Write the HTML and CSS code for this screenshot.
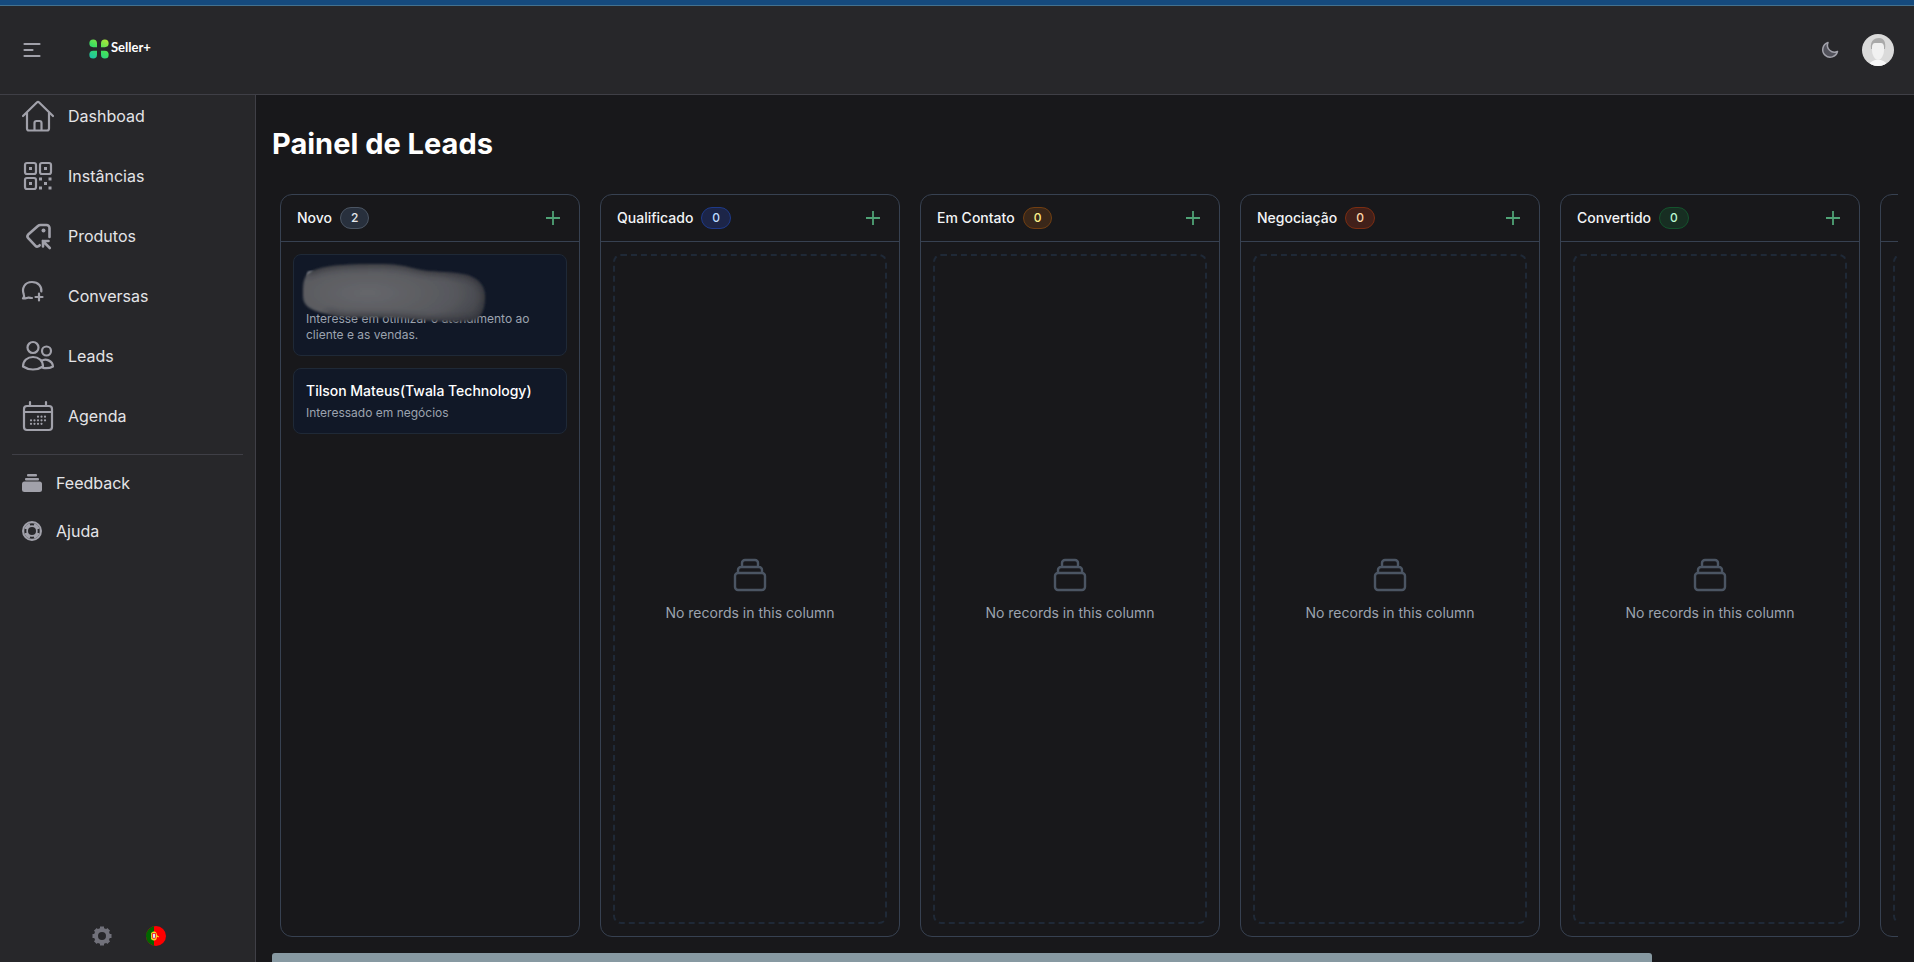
FILE: index.html
```html
<!DOCTYPE html>
<html lang="pt">
<head>
    <meta charset="UTF-8">
    <meta name="viewport" content="width=device-width, initial-scale=1.0">
    <title>Painel de Leads</title>
    <link rel="stylesheet" href="styles.css">
</head>
<body>

<svg class="sprite" aria-hidden="true">
    <symbol id="icon-plus" viewBox="0 0 20 20">
        <path d="M10 3v14M3 10h14"/>
    </symbol>
    <symbol id="icon-stack" viewBox="0 0 40 40">
        <rect x="5" y="18" width="30" height="17" rx="3"/>
        <path d="M8 18v-3a3 3 0 0 1 3-3h18a3 3 0 0 1 3 3v3M12 12V8a3 3 0 0 1 3-3h10a3 3 0 0 1 3 3v4"/>
    </symbol>
</svg>

<div class="top-strip"></div>

<header class="topbar">
    <button class="icon-btn" type="button" aria-label="Menu">
        <svg class="icon-24 line" viewBox="0 0 24 24"><path d="M4.500 6h15M4.500 12h8M4.500 18h15"/></svg>
    </button>
    <a class="logo" href="#">
        <svg class="logo-mark" viewBox="0 0 20 20">
            <defs>
                <linearGradient id="leaf" gradientUnits="userSpaceOnUse" x1="16" y1="1" x2="4" y2="19">
                    <stop offset="0" stop-color="#a5e63b"/>
                    <stop offset="0.5" stop-color="#3fe05f"/>
                    <stop offset="1" stop-color="#1fc6a0"/>
                </linearGradient>
            </defs>
            <g fill="url(#leaf)">
                <path d="M4.200.5A3.800 3.800 0 0 1 8 4.300V8.200H4.200a3.800 3.800 0 0 1 0-7.700z"/>
                <path d="M15.800.5A3.800 3.800 0 0 0 12 4.300V8.200h3.800a3.800 3.800 0 0 0 0-7.700z"/>
                <path d="M4.200 19.500A3.800 3.800 0 0 0 8 15.700V11.800H4.200a3.800 3.800 0 0 0 0 7.700z"/>
                <path d="M15.800 19.500A3.800 3.800 0 0 1 12 15.700V11.800h3.800a3.800 3.800 0 0 1 0 7.700z"/>
            </g>
        </svg>
        <span>Seller+</span>
    </a>
    <div class="topbar-right">
        <button class="icon-btn" type="button" aria-label="Tema">
            <svg class="icon-20 moon" viewBox="0 0 20 20"><path d="M8 2.500a7.500 7.500 0 1 0 9.500 9A7 7 0 0 1 8 2.500z"/></svg>
        </button>
        <button class="icon-btn" type="button" aria-label="Conta">
            <svg class="avatar" viewBox="0 0 32 32">
                <defs><clipPath id="round"><circle cx="16" cy="16" r="16"/></clipPath></defs>
                <g clip-path="url(#round)">
                    <rect width="32" height="32" fill="#dadada"/>
                    <path d="M7 32c0-4 4-5 6-6h6c2 1 6 2 6 6z" fill="#f8f8f8"/>
                    <path d="M9 15C8 8 11 4 17 4c5 0 7 4 6 11z" fill="#aaa"/>
                    <path d="M10 13c0-2 1-4 3-4h6c2 0 3 2 3 4v3c0 5-3 10-6 10s-6-5-6-10z" fill="#f1f1f1"/>
                </g>
            </svg>
        </button>
    </div>
</header>

<div class="layout">
    <aside class="sidebar">
        <nav>
            <ul class="menu">
                <li><a href="#">
                    <svg class="icon-36 line" viewBox="0 0 36 36"><path d="M3 18 16.800 4.500a1.700 1.700 0 0 1 2.400 0L33 18M7 15v15.500a2 2 0 0 0 2 2h18a2 2 0 0 0 2-2V15M14.500 32v-7a2 2 0 0 1 2-2h3a2 2 0 0 1 2 2v7"/></svg>
                    Dashboad
                </a></li>
                <li><a href="#">
                    <svg class="icon-36 line" viewBox="0 0 36 36">
                        <rect x="5" y="5" width="11" height="11" rx="2"/>
                        <rect x="20" y="5" width="11" height="11" rx="2"/>
                        <rect x="5" y="20" width="11" height="11" rx="2"/>
                        <path class="solid" d="M9 9h3v3H9zM24 9h3v3h-3zM9 24h3v3H9zM19 19.500h3v3h-3zM28.500 19.500h3v3h-3zM24 24h3v3h-3zM19 28.500h3v3h-3zM28.500 28.500h3v3h-3z"/>
                    </svg>
                    Instâncias
                </a></li>
                <li><a href="#">
                    <svg class="icon-36 line tag" viewBox="0 0 36 36">
                        <path d="M29.500 19V10a3 3 0 0 0-3-3h-6a4 4 0 0 0-2.600 1L8.200 16.500a2.600 2.600 0 0 0 0 3.500l7.300 7.800c1.200 1.300 3 1 4.200-.6M29.800 30l-7-7M23 28.500V23h5.500"/>
                        <circle class="solid" cx="23.500" cy="12.500" r="2"/>
                    </svg>
                    Produtos
                </a></li>
                <li><a href="#">
                    <span class="icon-slot">
                        <svg class="icon-24 line" viewBox="0 0 24 24"><path d="M12 20c-1.500 0-2.500-.6-4-.3-1.500.4-3 .8-5 .8 1-1.200 1.700-2.300.8-4C1.500 10.500 4.500 4 12 4c6.500 0 10 4.600 9.300 9.500M19 15.500v7M15.500 19h7"/></svg>
                    </span>
                    Conversas
                </a></li>
                <li><a href="#">
                    <svg class="icon-36 line" viewBox="0 0 36 36">
                        <circle cx="13" cy="9.500" r="5.500"/>
                        <circle cx="26.500" cy="13" r="4.500"/>
                        <path d="M3 28.500C3 22.500 7.500 19 13 19s10 3.500 10 9.500c-6 4-14 4-20 0zM21.500 23c4-3 11-.5 11.500 5.500-3 1.700-6.500 2-10 1.500"/>
                    </svg>
                    Leads
                </a></li>
                <li><a href="#">
                    <svg class="icon-36 line" viewBox="0 0 36 36">
                        <rect x="4" y="8" width="28" height="24" rx="3"/>
                        <path d="M4 14h28M10 4v4M26 4v4"/>
                        <path d="M18 18.700h.01M21.500 18.700h.01M25 18.700h.01M11 22.300h.01M14.500 22.300h.01M18 22.300h.01M21.500 22.300h.01M25 22.300h.01M11 25.800h.01M14.500 25.800h.01M18 25.800h.01M21.500 25.800h.01"/>
                    </svg>
                    Agenda
                </a></li>
            </ul>
            <ul class="menu menu-secondary">
                <li><a href="#">
                    <svg class="icon-24 filled" viewBox="0 0 24 24">
                        <rect x="7" y="3" width="10" height="2.500" rx="1"/>
                        <rect x="5" y="7" width="14" height="2.500" rx="1"/>
                        <rect x="2" y="10.500" width="20" height="10.500" rx="2.500"/>
                    </svg>
                    Feedback
                </a></li>
                <li><a href="#">
                    <svg class="icon-24" viewBox="0 0 24 24">
                        <circle class="buoy" cx="12" cy="12" r="6"/>
                        <circle class="buoy-rim" cx="12" cy="12" r="9"/>
                        <path class="buoy-cut" d="M10 5.600a7 7 0 0 1 4 0M10 18.400a7 7 0 0 0 4 0M5.600 10a7 7 0 0 0 0 4M18.400 10a7 7 0 0 1 0 4"/>
                    </svg>
                    Ajuda
                </a></li>
            </ul>
        </nav>
        <div class="sidebar-footer">
            <button class="icon-btn" type="button" aria-label="Definições">
                <svg class="icon-20 gear" viewBox="0 0 20 20">
                    <circle cx="10" cy="10" r="6"/>
                    <path d="M10 .5v3M10 16.500v3M.5 10h3M16.500 10h3M3.300 3.300l2 2M14.700 14.700l2 2M16.700 3.300l-2 2M5.300 14.700l-2 2"/>
                </svg>
            </button>
            <button class="icon-btn" type="button" aria-label="Português">
                <svg class="icon-20" viewBox="0 0 20 20">
                    <circle cx="10" cy="10" r="10" fill="#f00"/>
                    <path d="M8 .2a10 10 0 0 0 0 19.600z" fill="#060"/>
                    <ellipse cx="8" cy="10" rx="3" ry="4.500" fill="#f5e02a"/>
                    <path d="M5 7l8 4M5 13l7-3" stroke="#f5e02a"/>
                    <path d="M6 7h4v4a2 2 0 0 1-4 0z" fill="#e33"/>
                    <path d="M7 8h2v3a1 1 0 0 1-2 0z" fill="#dfe8ff"/>
                </svg>
            </button>
        </div>
    </aside>

    <main class="content">
        <h1>Painel de Leads</h1>

        <div class="board">
            <section class="column">
                <div class="column-header">
                    <h2>Novo</h2>
                    <span class="badge gray">2</span>
                    <button class="add-btn" type="button" aria-label="Adicionar"><svg class="icon-20"><use href="#icon-plus"/></svg></button>
                </div>
                <div class="column-body">
                    <article class="card">
                        <div class="card-hidden-title"></div>
                        <p>Interesse em otimizar o atendimento ao cliente e as vendas.</p>
                        <svg class="smudge" viewBox="0 0 210 76" aria-hidden="true">
                            <defs>
                                <radialGradient id="smoke" cx="0.35" cy="0.5" r="0.68">
                                    <stop offset="0" stop-color="#66676b"/>
                                    <stop offset="0.6" stop-color="#57585d"/>
                                    <stop offset="1" stop-color="#383a41"/>
                                </radialGradient>
                                <filter id="soft"><feGaussianBlur stdDeviation="1"/></filter>
                                <filter id="softer"><feGaussianBlur stdDeviation="3"/></filter>
                                <clipPath id="blob"><path d="M14 18C25 12 40 10 60 9.500c25-1 42-1 58 3.500 18 5 35 3 50 6 15 2 23 11 23 22 0 10-2 20-10 24-18 4-50 0-80-2-28-2-50 2-68-4C14 55 9 50 9 40c0-10 0-16 5-22z"/></clipPath>
                            </defs>
                            <path fill="#c5c8ce" filter="url(#soft)" d="M13 22l1-5 6-1z"/>
                            <g filter="url(#soft)">
                                <g clip-path="url(#blob)">
                                    <rect width="210" height="76" fill="url(#smoke)"/>
                                    <path fill="none" stroke="#2b2c32" stroke-width="4" filter="url(#softer)" d="M14 18C25 12 40 10 60 9.500c25-1 42-1 58 3.500 18 5 35 3 50 6 15 2 23 11 23 22 0 10-2 20-10 24-18 4-50 0-80-2-28-2-50 2-68-4"/>
                                </g>
                            </g>
                        </svg>
                    </article>
                    <article class="card">
                        <h3>Tilson Mateus(Twala Technology)</h3>
                        <p>Interessado em negócios</p>
                    </article>
                </div>
            </section>

            <section class="column">
                <div class="column-header">
                    <h2>Qualificado</h2>
                    <span class="badge blue">0</span>
                    <button class="add-btn" type="button" aria-label="Adicionar"><svg class="icon-20"><use href="#icon-plus"/></svg></button>
                </div>
                <div class="column-body">
                    <div class="empty">
                        <svg class="icon-40"><use href="#icon-stack"/></svg>
                        <p>No records in this column</p>
                    </div>
                </div>
            </section>

            <section class="column">
                <div class="column-header">
                    <h2>Em Contato</h2>
                    <span class="badge yellow">0</span>
                    <button class="add-btn" type="button" aria-label="Adicionar"><svg class="icon-20"><use href="#icon-plus"/></svg></button>
                </div>
                <div class="column-body">
                    <div class="empty">
                        <svg class="icon-40"><use href="#icon-stack"/></svg>
                        <p>No records in this column</p>
                    </div>
                </div>
            </section>

            <section class="column">
                <div class="column-header">
                    <h2>Negociação</h2>
                    <span class="badge orange">0</span>
                    <button class="add-btn" type="button" aria-label="Adicionar"><svg class="icon-20"><use href="#icon-plus"/></svg></button>
                </div>
                <div class="column-body">
                    <div class="empty">
                        <svg class="icon-40"><use href="#icon-stack"/></svg>
                        <p>No records in this column</p>
                    </div>
                </div>
            </section>

            <section class="column">
                <div class="column-header">
                    <h2>Convertido</h2>
                    <span class="badge green">0</span>
                    <button class="add-btn" type="button" aria-label="Adicionar"><svg class="icon-20"><use href="#icon-plus"/></svg></button>
                </div>
                <div class="column-body">
                    <div class="empty">
                        <svg class="icon-40"><use href="#icon-stack"/></svg>
                        <p>No records in this column</p>
                    </div>
                </div>
            </section>

            <section class="column">
                <div class="column-header"></div>
                <div class="column-body">
                    <div class="empty"></div>
                </div>
            </section>
        </div>
        <div class="board-scroll"><div class="board-thumb"></div></div>
    </main>
</div>

</body>
</html>
```

FILE: styles.css
```css
* {
    margin: 0;
    padding: 0;
    box-sizing: border-box;
}
body {
    font-family: Inter, sans-serif;
    background-color: #18181b;
    color: #fff;
    display: flex;
    flex-direction: column;
    height: 100vh;
    overflow: hidden;
}
a {
    color: inherit;
    text-decoration: none;
}
ul {
    list-style: none;
}
button {
    background: none;
    border: none;
    cursor: pointer;
}
svg {
    display: block;
    flex-shrink: 0;
}
.sprite {
    display: none;
}

/* icons */
.icon-20 {
    width: 20px;
    height: 20px;
}
.icon-24 {
    width: 24px;
    height: 24px;
}
.icon-36, .icon-slot {
    width: 36px;
    height: 36px;
}
.icon-40 {
    width: 40px;
    height: 40px;
}
.line {
    fill: none;
    stroke: #a1a1aa;
    stroke-width: 2.2;
    stroke-linecap: round;
    stroke-linejoin: round;
}
.tag {
    stroke-width: 2.6;
}
.solid {
    fill: #a1a1aa;
    stroke: none;
}
.filled {
    fill: #a1a1aa;
}
.moon {
    fill: #52525b;
    stroke: #a1a1aa;
    stroke-width: 1.5;
    stroke-linejoin: round;
}
.gear {
    fill: none;
    stroke: #71717a;
    stroke-width: 4;
}
.buoy, .buoy-rim {
    fill: none;
    stroke: #a1a1aa;
    stroke-width: 4;
}
.buoy-rim {
    stroke-width: 2;
}
.buoy-cut {
    fill: none;
    stroke: #27272a;
    stroke-width: 2;
}

/* header */
.top-strip {
    height: 6px;
    background-color: #154a7d;
    border-bottom: 1px solid #43718f;
    flex-shrink: 0;
}
.topbar {
    display: flex;
    align-items: center;
    height: 89px;
    flex-shrink: 0;
    padding: 0 20px;
    background-color: #27272a;
    border-bottom: 1px solid #3f3f46;
}
.logo {
    display: flex;
    align-items: center;
    gap: 2px;
    margin-left: 45px;
    padding-bottom: 2px;
    font-family: Lato, sans-serif;
    font-size: 13px;
    font-weight: bold;
    line-height: 16px;
}
.logo span {
    padding-bottom: 4px;
}
.logo-mark {
    width: 20px;
    height: 20px;
}
.topbar-right {
    display: flex;
    align-items: center;
    gap: 22px;
    margin-left: auto;
}
.avatar {
    width: 32px;
    height: 32px;
}

/* sidebar */
.layout {
    display: flex;
    flex: 1;
    min-height: 0;
}
.sidebar {
    display: flex;
    flex-direction: column;
    justify-content: space-between;
    width: 256px;
    flex-shrink: 0;
    background-color: #27272a;
    border-right: 1px solid #3f3f46;
}
.menu {
    display: flex;
    flex-direction: column;
    gap: 24px;
    padding: 3px 20px 20px;
}
.menu a {
    display: flex;
    align-items: center;
    gap: 12px;
    font-size: 16px;
    line-height: 24px;
    color: #e4e4e7;
}
.menu-secondary {
    margin: 0 12px;
    padding: 16px 8px;
    border-top: 1px solid #3f3f46;
}
.sidebar-footer {
    display: flex;
    gap: 34px;
    padding: 0 92px 16px;
}

/* board */
.content {
    display: flex;
    flex-direction: column;
    flex: 1;
    min-width: 0;
    padding: 31px 16px 0;
}
h1 {
    font-size: 29px;
    line-height: 36px;
    margin-bottom: 32px;
}
.board {
    display: flex;
    flex: 1;
    gap: 20px;
    min-height: 0;
    padding: 0 8px 16px;
    overflow: hidden;
}
.column {
    display: flex;
    flex-direction: column;
    width: 300px;
    flex-shrink: 0;
    border: 1px solid #374151;
    border-radius: 12px;
}
.column-header {
    display: flex;
    align-items: center;
    gap: 8px;
    height: 47px;
    padding: 0 16px;
    border-bottom: 1px solid #374151;
}
.column-header h2 {
    font-size: 14px;
    font-weight: 500;
    line-height: 20px;
    color: #f3f4f6;
}
.badge {
    padding: 2px 10px;
    border: 1px solid;
    border-radius: 11px;
    font-size: 12px;
    font-weight: 500;
    line-height: 16px;
}
.gray {
    background-color: #28303d;
    border-color: #4b5563;
    color: #e5e7eb;
}
.blue {
    background-color: #1c2548;
    border-color: #1e3a8a;
    color: #bfdbfe;
}
.yellow {
    background-color: #3a2719;
    border-color: #713f12;
    color: #fef08a;
}
.orange {
    background-color: #42201a;
    border-color: #7c2d12;
    color: #fed7aa;
}
.green {
    background-color: #172e22;
    border-color: #14532d;
    color: #bbf7d0;
}
.add-btn {
    margin-left: auto;
    fill: none;
    stroke: #4fa276;
    stroke-width: 1.8;
}
.column-body {
    display: flex;
    flex-direction: column;
    flex: 1;
    gap: 12px;
    padding: 12px;
}
.card {
    position: relative;
    padding: 12px;
    background-color: #111827;
    border: 1px solid #1f2937;
    border-radius: 8px;
}
.card h3 {
    font-size: 14px;
    font-weight: 500;
    line-height: 20px;
}
.card p {
    margin-top: 4px;
    font-size: 12px;
    line-height: 16px;
    color: #9ca3af;
}
.card-hidden-title {
    height: 40px;
}
.smudge {
    position: absolute;
    top: 0;
    left: 0;
    width: 210px;
    height: 76px;
}
.empty {
    display: flex;
    flex-direction: column;
    align-items: center;
    justify-content: center;
    flex: 1;
    gap: 8px;
    border: 2px dashed #1f2937;
    border-radius: 8px;
    font-size: 14px;
    line-height: 20px;
    color: #9ca3af;
    fill: none;
    stroke: #4b5563;
    stroke-width: 2.4;
}
.empty p {
    stroke: none;
}
.board-scroll {
    height: 9px;
    flex-shrink: 0;
    padding-right: 2px;
}
.board-thumb {
    width: 85%;
    height: 100%;
    background-color: #8799a2;
    border-radius: 3px 3px 0 0;
}
```
